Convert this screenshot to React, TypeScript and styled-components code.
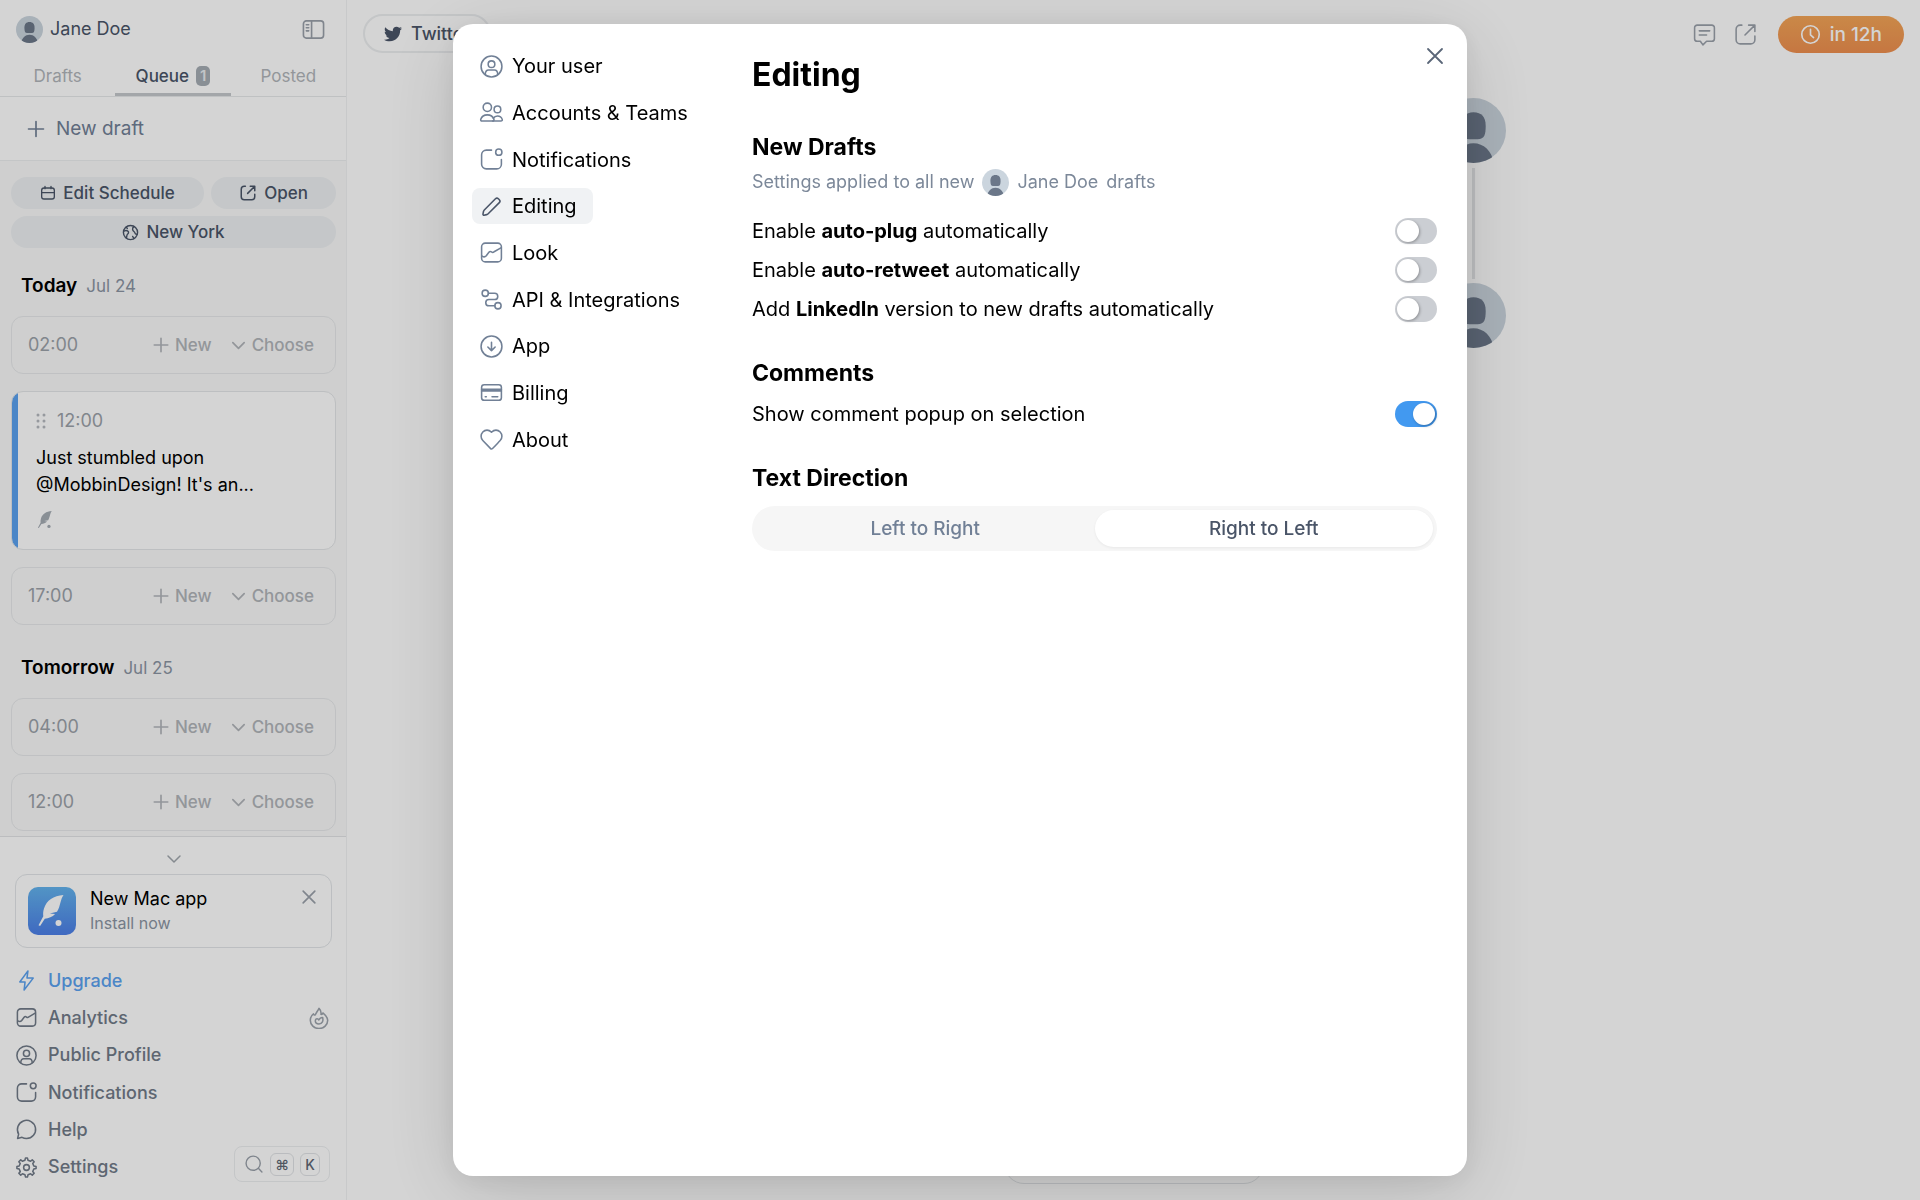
import React, { useState } from "react";
import styled, { createGlobalStyle, css } from "styled-components";
import { FaTwitter } from "react-icons/fa";

const GlobalStyle = createGlobalStyle`
  *, *::before, *::after { box-sizing: border-box; }
  body {
    margin: 0;
    font-family: Inter, "Liberation Sans", sans-serif;
    font-size: 18px;
    line-height: 24px;
    color: #000;
    background: #fff;
    -webkit-font-smoothing: antialiased;
  }
  h1, h2, h3, p, ul { margin: 0; padding: 0; }
  ul { list-style: none; }
  button { font: inherit; color: inherit; background: none; border: 0; padding: 0; cursor: pointer; }
  a { color: inherit; text-decoration: none; }
`;

/* ---------- Icons ---------- */

const Svg = styled.svg`
  flex: none;
  display: block;
  fill: none;
  stroke: currentColor;
  stroke-linecap: round;
  stroke-linejoin: round;
`;

const Shape = styled(Svg)`
  fill: currentColor;
  stroke: none;
`;

const icons = {
  userCircle: (
    <>
      <circle cx="12" cy="12" r="10" />
      <circle cx="12" cy="9.8" r="3.2" />
      <path d="M6 19.5c.1-2.900 1-4.200 3.200-4.200h5.600c2.200 0 3.100 1.300 3.200 4.200" />
    </>
  ),
  group: (
    <>
      <circle cx="8" cy="7" r="4" />
      <circle cx="17.700" cy="9" r="3.200" />
      <path d="M3 20.200c-1.200 0-1.600-.8-1.300-1.700.9-2.700 3.200-4.200 6.300-4.200s5.400 1.500 6.300 4.200c.3.900-.1 1.700-1.300 1.700z" />
      <path d="M13 20.200h8c1.100 0 1.600-.7 1.300-1.600-.7-2-2.300-3.200-4.500-3.200-1.800 0-3.200.8-4 2.100" />
    </>
  ),
  notification: (
    <>
      <circle cx="19" cy="5" r="3" />
      <path d="M21.500 12v4.500a4.500 4.500 0 0 1-4.500 4.500H7A4.500 4.500 0 0 1 2.500 16.500v-9A4.500 4.500 0 0 1 7 3H12" />
    </>
  ),
  pencil: (
    <path d="M5.100 15.300 15.800 4.600a2 2 0 0 1 2.800 0l.9.900a2 2 0 0 1 0 2.800L8.800 19a3 3 0 0 1-1.500.8l-2.500.500a.9.900 0 0 1-1-1l.500-2.500a3 3 0 0 1 .8-1.500z" />
  ),
  graph: (
    <>
      <rect x="2.500" y="3" width="19" height="18" rx="3.500" />
      <path d="M3 15.500c1.500 1 3 .8 4-.4l2.500-3.300c.8-1 1.600-1 2.500-.3s1.700.600 2.500-.2L21 7.500" />
    </>
  ),
  route: (
    <>
      <circle cx="6" cy="6" r="3" />
      <circle cx="18.200" cy="18" r="3" />
      <path d="M9 6h6a3 3 0 0 1 0 6H9.500a3 3 0 0 0 0 6h5.700" />
    </>
  ),
  download: (
    <>
      <circle cx="12" cy="12" r="10" />
      <path d="M12 8v8M8.500 12.500 12 16l3.500-3.500" />
    </>
  ),
  card: (
    <>
      <rect x="2.500" y="4.500" width="19" height="15" rx="2.500" />
      <path d="M2.500 9h19M2.500 10.500h19M6 16h1M12.500 16h5.500" />
    </>
  ),
  heart: (
    <path d="M22 8.862a5.950 5.950 0 0 1-1.654 4.130c-2.441 2.531-4.809 5.170-7.340 7.608-.581.550-1.502.530-2.057-.045l-7.295-7.562c-2.205-2.286-2.205-5.976 0-8.261a5.580 5.580 0 0 1 8.080 0l.266.274.265-.274A5.612 5.612 0 0 1 16.305 3c1.520 0 2.973.624 4.040 1.732A5.950 5.950 0 0 1 22 8.862z" />
  ),
  close: <path d="M5 5l14 14M19 5 5 19" />,
  plus: <path d="M12 3v18M3 12h18" />,
  chevron: <path d="m4 8 8 8 8-8" />,
  bolt: <path d="M13.500 2 5 13.500h5.500L9.500 22 19 9.500h-6.500z" />,
  help: (
    <path d="M12 21.500a9.500 9.500 0 1 0-8.200-4.700L2.700 21.300l4.600-1.100A9.500 9.500 0 0 0 12 21.500z" />
  ),
  gear: (
    <>
      <circle cx="12" cy="12" r="3" />
      <path d="m19.622 10.395-1.097-2.650L20 6l-2-2-1.735 1.483-2.707-1.113L12.935 2h-1.954l-.632 2.401-2.645 1.115L6 4 4 6l1.453 1.789-1.080 2.657L2 11v2l2.401.655L5.516 16.300 4 18l2 2 1.791-1.460 2.606 1.072L11 22h2l.604-2.387 2.651-1.098L18 20l2-2-1.484-1.750 1.098-2.652L22 12.978V11z" />
    </>
  ),
  search: (
    <>
      <circle cx="11" cy="11" r="8.500" />
      <path d="m17.500 17.500 4 4" />
    </>
  ),
  flame: (
    <>
      <path d="M8 8.500C9 6 10.500 4.500 12 1.500c2 2 2.500 4.500 2.200 6.500.8.200 1.600-.3 2-1.500 3 2.500 5.300 4.800 5.300 8a9.500 9 0 0 1-19 0c0-3 1.500-5.500 3.500-7 .2 1 1 1.500 2 1z" />
      <path d="M9 13c1.500-.5 2.500.500 2.800 1.200.8-1.700 2.200-2.700 4.200-2.700.500 2 .500 3.500-.2 4.800-.8 1.500-2.300 2.200-3.800 2.200-2.500 0-4-1.500-4-3.200 0-1 .3-1.800 1-2.300z" />
    </>
  ),
  open: (
    <>
      <path d="M15 3h6v6M21 3l-9.500 9.500" />
      <path d="M21 13.500V17a4 4 0 0 1-4 4H7a4 4 0 0 1-4-4V7a4 4 0 0 1 4-4h1.500" />
    </>
  ),
  comment: (
    <path d="M5 3h14a2.500 2.500 0 0 1 2.500 2.500V16a2.500 2.500 0 0 1-2.500 2.500h-5L10.500 22 8 18.500H5A2.500 2.500 0 0 1 2.500 16V5.500A2.500 2.500 0 0 1 5 3zM7 8.500h10M7 12.500h7" />
  ),
  calendar: (
    <>
      <rect x="2.500" y="4.500" width="19" height="16.500" rx="3.500" />
      <path d="M2.500 11.500h19M7.500 2v3.500M16.500 2v3.500" />
    </>
  ),
  globe: (
    <>
      <circle cx="12" cy="12" r="10" />
      <path d="M2.500 10c2-.8 4.500-1 6 .3 1.500 1.400.500 3.200-.8 4.200-1.200 1-.7 3-1.500 5.300M21.500 14.500c-2 .2-3-.5-3.300-2-.3-1.800-2.700-2-3.200-4.500-.4-2 .7-3.500 2-4.600M15 17.500l2 3M6 4.200l1.500 2.300" />
    </>
  ),
  sidebar: (
    <>
      <rect x="1.500" y="3" width="21" height="18" rx="3" />
      <path d="M10 3v18M4.500 7h2.500M4.500 10.200h2.500M4.500 13.400h2.500" />
    </>
  ),
  clock: (
    <>
      <circle cx="12" cy="12" r="10" />
      <path d="M12 6v6.500l3.500 3" />
    </>
  ),
};

type IconName = keyof typeof icons;

function Icon({ name, size = 22, weight = 1.5 }: { name: IconName; size?: number; weight?: number }) {
  return (
    <Svg viewBox="0 0 24 24" width={size} height={size} strokeWidth={weight} aria-hidden="true">
      {icons[name]}
    </Svg>
  );
}

function Avatar({ size }: { size: number }) {
  return (
    <Shape viewBox="0 0 64 64" width={size} height={size} aria-hidden="true">
      <defs>
        <clipPath id={`face${size}`}>
          <circle cx="32" cy="32" r="32" />
        </clipPath>
      </defs>
      <g clipPath={`url(#face${size})`}>
        <rect width="64" height="64" fill="#cbd5de" />
        <path d="M32 14c8 0 12 5 12 13 0 9-1 13.500-8 13.500h-8c-7 0-8-4.500-8-13.500 0-8 4-13 12-13z" fill="#6b7789" />
        <path d="M12 64c2-12 10-19.500 20-19.500S50 52 52 64z" fill="#6b7789" />
      </g>
    </Shape>
  );
}

const featherShape = (
  <>
    <path d="M35.500 8c-10 .5-17 5.500-19.500 13.500-.9 2.800-1 5.500-.7 7.800L10.500 38.300l1.600.8 4.700-7.400c3.700-.2 7.700-1.800 10.300-4.700l-5.300-.6 7.200-1.600c1.900-2.800 2.600-6.300 3.600-9.800.7-2.500 1.400-4.900 2.900-7z" />
    <circle cx="30.500" cy="36" r="3" />
  </>
);

/* ---------- Page ---------- */

const Page = styled.div`
  display: flex;
  height: 100vh;
  overflow: hidden;
`;

const Sidebar = styled.aside`
  flex: none;
  display: flex;
  flex-direction: column;
  width: 347px;
  border-right: 1px solid #f1f2f3;
`;

const Profile = styled.header`
  display: flex;
  align-items: center;
  gap: 7px;
  padding: 12px 21px 0 16px;
  height: 46px;
  color: #4a5568;
`;

const ProfileName = styled.span`
  flex: 1;
`;

const IconButton = styled.button`
  display: grid;
  place-items: center;
  color: #9aa1aa;
`;

const Tabs = styled.nav`
  display: grid;
  grid-template-columns: repeat(3, 1fr);
  height: 51px;
  border-bottom: 1px solid #e6e8ea;
`;

const Tab = styled.button<{ $active?: boolean }>`
  display: flex;
  align-items: center;
  justify-content: center;
  gap: 7px;
  padding-top: 13px;
  font-size: 17px;
  color: #b1b5ba;
  border-bottom: 3px solid transparent;
  ${(p) => p.$active && css`
    color: #4a5568;
    font-weight: 500;
    border-bottom-color: #c4c8cc;
  `}
`;

const Count = styled.span`
  padding: 0 4px;
  font-size: 15px;
  font-weight: 600;
  line-height: 20px;
  color: #e8ecef;
  background: #a5acb4;
  border-radius: 5px;
`;

const NewDraft = styled.button`
  display: flex;
  align-items: center;
  gap: 10px;
  height: 64px;
  padding-left: 26px;
  font-size: 19px;
  color: #718096;
  border-bottom: 1px solid #eceef0;
`;

const Queue = styled.div`
  flex: 1;
  min-height: 0;
  overflow: hidden;
  padding: 16px 10px 0 11px;
  background: #f9f9f9;
`;

const PillRow = styled.div`
  display: grid;
  grid-template-columns: 17fr 11fr;
  gap: 7px;
`;

const Pill = styled.button<{ $wide?: boolean }>`
  grid-column: ${(p) => (p.$wide ? "1 / -1" : "auto")};
  display: flex;
  align-items: center;
  justify-content: center;
  gap: 7px;
  height: 32px;
  font-size: 17px;
  font-weight: 500;
  color: #4a5568;
  background: #edf0f2;
  border-radius: 16px;
`;

const Day = styled.h3`
  display: flex;
  gap: 9px;
  padding: 26px 10px 18px;
  font-size: 19px;
  font-weight: 600;
`;

const DayDate = styled.span`
  font-size: 17px;
  font-weight: 400;
  color: #8b95a3;
`;

const Slots = styled.div`
  display: flex;
  flex-direction: column;
  gap: 17px;
  margin-bottom: 5px;
`;

const Slot = styled.div`
  display: flex;
  align-items: center;
  justify-content: space-between;
  height: 58px;
  padding: 0 21px 0 16px;
  border: 1px solid #e7e9eb;
  border-radius: 12px;
`;

const Time = styled.time`
  font-size: 18px;
  color: #9ca2a9;
`;

const SlotActions = styled.div`
  display: flex;
  gap: 18px;
`;

const SlotButton = styled.button`
  display: flex;
  align-items: center;
  gap: 5px;
  font-size: 17px;
  font-weight: 500;
  color: #b1b5ba;
`;

const Post = styled.article`
  display: flex;
  flex-direction: column;
  height: 159px;
  padding: 17px 24px 0;
  background: linear-gradient(to right, #5ba2f0 6px, #fff 6px);
  border: 1px solid #e4e6e8;
  border-radius: 12px;
`;

const PostTime = styled.div`
  display: flex;
  align-items: center;
  gap: 11px;
  color: #b5b9be;
`;

const PostText = styled.p`
  margin: 11px 0 12px;
  line-height: 27px;
`;

const PostFeather = styled(Shape)`
  width: 16px;
  height: 19px;
  color: #a5acb4;
`;

const Footer = styled.footer`
  padding: 8px 14px 14px 15px;
  border-top: 1px solid #e2e4e6;
`;

const Collapse = styled.button`
  display: grid;
  place-items: center;
  width: 100%;
  height: 28px;
  color: #a0a6ad;
`;

const Promo = styled.section`
  display: flex;
  gap: 14px;
  height: 74px;
  padding: 12px;
  margin: 1px 0 14px;
  border: 1px solid #e2e5e8;
  border-radius: 12px;
`;

const PromoLogo = styled.div`
  display: grid;
  place-items: center;
  width: 48px;
  height: 48px;
  color: #fff;
  border-radius: 10px;
  background: linear-gradient(#63b3ed, #4c7fe8);
`;

const PromoText = styled.div`
  flex: 1;
`;

const PromoLink = styled.a`
  display: block;
  font-size: 16px;
  color: #8b95a3;
`;

const PromoClose = styled(IconButton)`
  align-self: flex-start;
  height: 20px;
`;

const FooterStack = styled.div`
  display: grid;
  > * { grid-area: 1 / 1; }
`;

const FooterLinks = styled.ul`
  display: grid;
  grid-auto-rows: 1fr;
  min-height: 224px;
`;

const FooterItem = styled.li`
  display: flex;
  align-items: center;
  justify-content: space-between;
  padding-right: 2px;
  color: #9da4ad;
`;

const FooterLink = styled.a<{ $accent?: boolean }>`
  display: flex;
  align-items: center;
  gap: 10px;
  font-weight: 500;
  color: ${(p) => (p.$accent ? "#5ba2f0" : "#717b89")};
`;

const SearchBox = styled.button`
  place-self: end;
  display: flex;
  align-items: center;
  gap: 6px;
  height: 36px;
  margin: 0 2px 4px 0;
  padding: 0 9px;
  color: #9aa1aa;
  border: 1px solid #eceef0;
  border-radius: 8px;
`;

const Key = styled.kbd`
  min-width: 20px;
  padding: 0 4px;
  font: 500 14px/21px Inter, "DejaVu Sans", sans-serif;
  color: #5f6875;
  border: 1px solid #e0e3e6;
  border-radius: 6px;
`;

const Main = styled.main`
  flex: 1;
  display: flex;
  flex-direction: column;
`;

const TopBar = styled.header`
  display: flex;
  align-items: flex-start;
  justify-content: space-between;
  padding: 14px 16px 0;
`;

const NetworkPill = styled.button`
  display: flex;
  align-items: center;
  gap: 9px;
  height: 39px;
  padding: 0 19px;
  font-weight: 500;
  color: #4a5568;
  border: 2px solid #eceef0;
  border-radius: 20px;
`;

const TopActions = styled.div`
  display: flex;
  align-items: center;
  gap: 16px;
  margin-top: 2px;
`;

const ScheduleButton = styled.button`
  display: flex;
  align-items: center;
  gap: 9px;
  height: 37px;
  margin-left: 4px;
  padding: 0 22px;
  font-size: 19px;
  font-weight: 500;
  color: #fff;
  background: linear-gradient(#f3a557, #ee8f4f);
  border-radius: 19px;
`;

const Thread = styled.section`
  flex: 1;
  display: flex;
  flex-direction: column;
  align-items: flex-end;
  width: 744px;
  margin: 45px auto 0;
`;

const ThreadPost = styled.div`
  display: flex;
  flex-direction: column;
  align-items: center;
  width: 64px;
`;

const ThreadLine = styled.div`
  width: 3px;
  height: 111px;
  margin: 5px 0 4px;
  background: #e4e6e8;
`;

const BottomBar = styled.div`
  align-self: center;
  width: 260px;
  height: 48px;
  margin-bottom: 16px;
  border: 1px solid #e2e5e8;
  border-radius: 20px;
`;

/* ---------- Settings dialog ---------- */

const Overlay = styled.div`
  position: fixed;
  inset: 0;
  display: flex;
  align-items: stretch;
  justify-content: center;
  padding: 24px;
  background: rgba(0, 0, 0, 0.17);
`;

const Dialog = styled.div`
  position: relative;
  display: flex;
  width: 100%;
  max-width: 1014px;
  padding: 19px 30px 0 19px;
  background: #fff;
  border-radius: 20px;
  box-shadow: 0 16px 80px rgba(0, 0, 0, 0.14), 0 4px 24px rgba(0, 0, 0, 0.07);
`;

const SettingsNav = styled.nav`
  flex: none;
  display: grid;
  grid-auto-rows: 1fr;
  align-self: flex-start;
  justify-items: start;
  align-items: center;
  width: 280px;
  min-height: 420px;
`;

const NavLink = styled.a<{ $active?: boolean }>`
  display: flex;
  align-items: center;
  gap: 8px;
  height: 36px;
  padding: 0 16px 0 7px;
  font-size: 20px;
  border-radius: 8px;
  background: ${(p) => (p.$active ? "#f0f2f4" : "none")};
  svg { color: ${(p) => (p.$active ? "#4a5568" : "#718096")}; }
`;

const CloseButton = styled.button`
  position: absolute;
  top: 20px;
  right: 20px;
  display: grid;
  place-items: center;
  width: 24px;
  height: 24px;
  color: #5a6678;
`;

const Panel = styled.div`
  flex: 1;
  padding-top: 12px;
`;

const Title = styled.h1`
  margin-bottom: 36px;
  font-size: 32px;
  font-weight: 700;
  line-height: 40px;
`;

const Section = styled.section`
  margin-bottom: 29px;
`;

const Heading = styled.h2`
  margin-bottom: 5px;
  font-size: 23px;
  font-weight: 700;
  line-height: 32px;
`;

const Hint = styled.p`
  display: flex;
  align-items: center;
  gap: 8px;
  height: 28px;
  margin-bottom: 15px;
  color: #7c8899;
`;

const OptionRow = styled.label`
  display: flex;
  align-items: center;
  justify-content: space-between;
  height: 39px;
  font-size: 20px;
`;

const OptionText = styled.span`
  strong { font-weight: 700; }
`;

const Toggle = styled.input`
  appearance: none;
  width: 42px;
  height: 26px;
  margin: 0;
  padding: 2px;
  background: #cbced3;
  border-radius: 13px;
  cursor: pointer;
  &::before {
    content: "";
    display: block;
    width: 22px;
    height: 22px;
    background: #fff;
    border-radius: 50%;
    box-shadow: 1px 1px 3px rgba(0, 0, 0, 0.3);
  }
  &:checked { background: #4299f0; }
  &:checked::before { margin-left: auto; }
`;

const Segments = styled.div`
  display: grid;
  grid-template-columns: 1fr 1fr;
  height: 45px;
  margin-top: 12px;
  padding: 4px;
  background: #f6f6f6;
  border-radius: 23px;
`;

const Segment = styled.label`
  display: grid;
  place-items: center;
  font-size: 19px;
  font-weight: 500;
  color: #718096;
  border-radius: 19px;
  cursor: pointer;
  input { appearance: none; position: absolute; margin: 0; }
  &:has(input:checked) {
    color: #4a5568;
    background: #fff;
    box-shadow: 0 1px 3px rgba(0, 0, 0, 0.06);
  }
`;

const settingsPages: [IconName, string][] = [
  ["userCircle", "Your user"],
  ["group", "Accounts & Teams"],
  ["notification", "Notifications"],
  ["pencil", "Editing"],
  ["graph", "Look"],
  ["route", "API & Integrations"],
  ["download", "App"],
  ["card", "Billing"],
  ["heart", "About"],
];

const footerLinks: [IconName, string][] = [
  ["bolt", "Upgrade"],
  ["graph", "Analytics"],
  ["userCircle", "Public Profile"],
  ["notification", "Notifications"],
  ["help", "Help"],
  ["gear", "Settings"],
];

function EmptySlot({ time }: { time: string }) {
  return (
    <Slot>
      <Time>{time}</Time>
      <SlotActions>
        <SlotButton>
          <Icon name="plus" size={18} weight={2.2} />
          New
        </SlotButton>
        <SlotButton>
          <Icon name="chevron" size={17} weight={2.4} />
          Choose
        </SlotButton>
      </SlotActions>
    </Slot>
  );
}

function Option({ id, on, children }: { id: string; on?: boolean; children: React.ReactNode }) {
  return (
    <OptionRow htmlFor={id}>
      <OptionText>{children}</OptionText>
      <Toggle id={id} type="checkbox" defaultChecked={on} />
    </OptionRow>
  );
}

function SettingsDialog() {
  const [direction, setDirection] = useState("rtl");
  return (
    <Overlay>
      <Dialog role="dialog" aria-modal="true" aria-labelledby="settings-title">
        <SettingsNav>
          {settingsPages.map(([icon, label]) => (
            <NavLink key={label} href="#" $active={label === "Editing"}>
              <Icon name={icon} size={25} weight={1.5} />
              {label}
            </NavLink>
          ))}
        </SettingsNav>
        <Panel>
          <Title id="settings-title">Editing</Title>
          <Section>
            <Heading>New Drafts</Heading>
            <Hint>
              Settings applied to all new <Avatar size={27} /> Jane Doe <span>drafts</span>
            </Hint>
            <Option id="auto-plug">Enable <strong>auto-plug</strong> automatically</Option>
            <Option id="auto-retweet">Enable <strong>auto-retweet</strong> automatically</Option>
            <Option id="linkedin">
              Add <strong>LinkedIn</strong> version to new drafts automatically
            </Option>
          </Section>
          <Section>
            <Heading>Comments</Heading>
            <Option id="popup" on>Show comment popup on selection</Option>
          </Section>
          <Section>
            <Heading>Text Direction</Heading>
            <Segments role="radiogroup" aria-label="Text Direction">
              {[["ltr", "Left to Right"], ["rtl", "Right to Left"]].map(([value, label]) => (
                <Segment key={value}>
                  <input
                    type="radio"
                    name="direction"
                    value={value}
                    checked={direction === value}
                    onChange={() => setDirection(value)}
                  />
                  {label}
                </Segment>
              ))}
            </Segments>
          </Section>
        </Panel>
        <CloseButton aria-label="Close">
          <Icon name="close" size={24} weight={1.8} />
        </CloseButton>
      </Dialog>
    </Overlay>
  );
}

export default function App() {
  return (
    <>
      <GlobalStyle />
      <Page>
        <Sidebar>
          <Profile>
            <Avatar size={27} />
            <ProfileName>Jane Doe</ProfileName>
            <IconButton aria-label="Toggle sidebar">
              <Icon name="sidebar" size={23} weight={1.7} />
            </IconButton>
          </Profile>
          <Tabs>
            <Tab>Drafts</Tab>
            <Tab $active>
              Queue <Count>1</Count>
            </Tab>
            <Tab>Posted</Tab>
          </Tabs>
          <NewDraft>
            <Icon name="plus" size={20} weight={2} />
            New draft
          </NewDraft>
          <Queue>
            <PillRow>
              <Pill>
                <Icon name="calendar" size={16} weight={2} />
                Edit Schedule
              </Pill>
              <Pill>
                <Icon name="open" size={18} weight={2} />
                Open
              </Pill>
              <Pill $wide>
                <Icon name="globe" size={17} weight={2} />
                New York
              </Pill>
            </PillRow>
            <Day>
              Today <DayDate>Jul 24</DayDate>
            </Day>
            <Slots>
              <EmptySlot time="02:00" />
              <Post>
                <PostTime>
                  <Svg viewBox="0 0 10 16" width={10} height={16} strokeWidth={3} aria-hidden="true">
                    <path d="M2 2h0M8 2h0M2 8h0M8 8h0M2 14h0M8 14h0" />
                  </Svg>
                  <Time>12:00</Time>
                </PostTime>
                <PostText>
                  Just stumbled upon
                  <br />
                  @MobbinDesign! It's an...
                </PostText>
                <PostFeather viewBox="7 7 29 33" aria-hidden="true">{featherShape}</PostFeather>
              </Post>
              <EmptySlot time="17:00" />
            </Slots>
            <Day>
              Tomorrow <DayDate>Jul 25</DayDate>
            </Day>
            <Slots>
              <EmptySlot time="04:00" />
              <EmptySlot time="12:00" />
            </Slots>
          </Queue>
          <Footer>
            <Collapse aria-label="Collapse">
              <Icon name="chevron" size={18} weight={2} />
            </Collapse>
            <Promo>
              <PromoLogo>
                <Shape viewBox="0 0 48 48" width={48} height={48} aria-hidden="true">{featherShape}</Shape>
              </PromoLogo>
              <PromoText>
                New Mac app
                <PromoLink href="#">Install now</PromoLink>
              </PromoText>
              <PromoClose aria-label="Dismiss">
                <Icon name="close" size={20} weight={2} />
              </PromoClose>
            </Promo>
            <FooterStack>
              <FooterLinks>
                {footerLinks.map(([icon, label]) => (
                  <FooterItem key={label}>
                    <FooterLink href="#" $accent={label === "Upgrade"}>
                      <Icon name={icon} size={23} weight={1.6} />
                      {label}
                    </FooterLink>
                    {label === "Analytics" && <Icon name="flame" size={22} weight={1.7} />}
                  </FooterItem>
                ))}
              </FooterLinks>
              <SearchBox aria-label="Search">
                <Icon name="search" size={20} weight={1.7} />
                <Key>⌘</Key>
                <Key>K</Key>
              </SearchBox>
            </FooterStack>
          </Footer>
        </Sidebar>
        <Main>
          <TopBar>
            <NetworkPill>
              <FaTwitter size={18} />
              Twitter
            </NetworkPill>
            <TopActions>
              <IconButton aria-label="Comments">
                <Icon name="comment" size={25} weight={1.5} />
              </IconButton>
              <IconButton aria-label="Open draft">
                <Icon name="open" size={25} weight={1.5} />
              </IconButton>
              <ScheduleButton>
                <Icon name="clock" size={21} weight={1.9} />
                in 12h
              </ScheduleButton>
            </TopActions>
          </TopBar>
          <Thread>
            <ThreadPost>
              <Avatar size={65} />
              <ThreadLine />
              <Avatar size={65} />
            </ThreadPost>
          </Thread>
          <BottomBar />
        </Main>
      </Page>
      <SettingsDialog />
    </>
  );
}
